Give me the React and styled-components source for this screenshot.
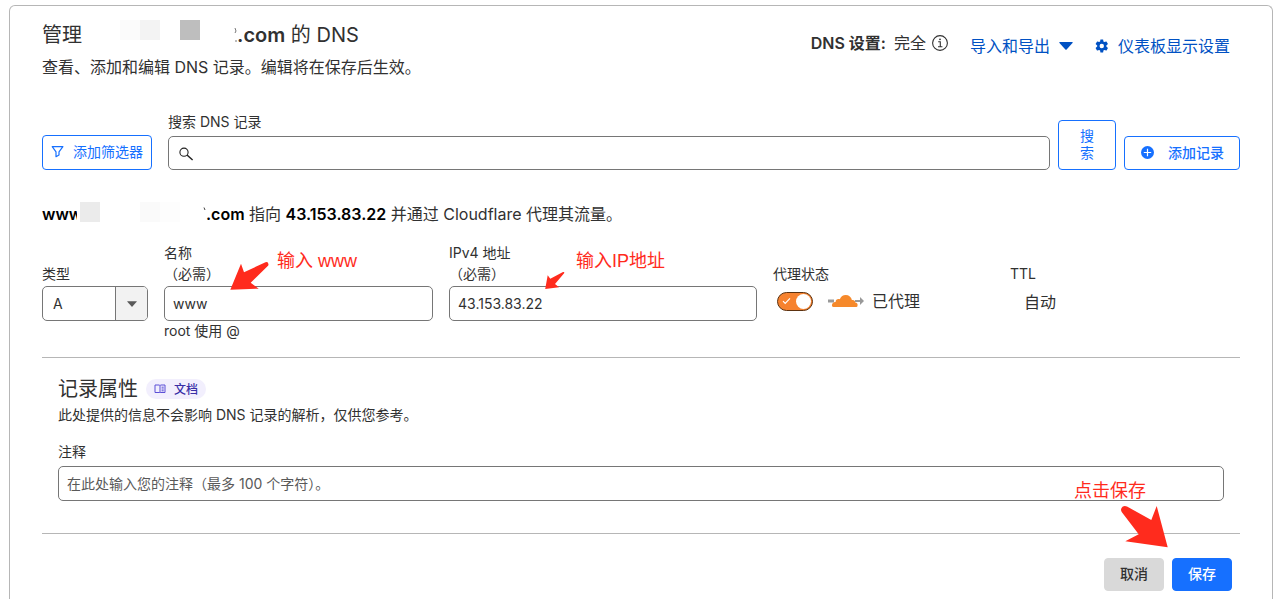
import React, { useState } from "react";
import styled, { createGlobalStyle, css } from "styled-components";

const GlobalStyle = createGlobalStyle`
  :root {
    --text: #313131;
    --muted: #595959;
    --line: #b6b6b6;
    --field: #767676;
    --blue: #1670ff;
    --link: #0051c3;
    --orange: #f6822f;
    --note: #ff2b1d;
  }

  * {
    box-sizing: border-box;
  }

  body {
    margin: 0;
    background: #fff;
    color: var(--text);
    font-family: Inter, "Noto Sans CJK SC", sans-serif;
    font-size: 14px;
    line-height: 21px;
  }

  button, input, select {
    font: inherit;
    color: inherit;
    margin: 0;
  }
`;

const Page = styled.main`
  padding: 5px 8px 0 9px;
`;

const Card = styled.section`
  padding: 14px 32px 8px;
  border: 1px solid var(--line);
  border-bottom: 0;
  border-radius: 6px 6px 0 0;
`;

const Header = styled.header`
  display: flex;
  justify-content: space-between;
  padding-right: 10px;
  margin-bottom: 32px;
`;

const Title = styled.h1`
  display: flex;
  align-items: center;
  margin: 0 0 5px;
  font-size: 20px;
  font-weight: 400;
  line-height: 30px;
  white-space: pre;

  strong {
    font-weight: 600;
  }
`;

const Subtitle = styled.p`
  margin: 0;
  font-size: 16px;
  line-height: 24px;
`;

const HeaderActions = styled.div`
  display: flex;
  align-items: center;
  gap: 22px;
  height: 52px;
  font-size: 16px;
  line-height: 24px;
`;

const DnsSetup = styled.div`
  display: flex;
  align-items: center;
  gap: 6px;
  padding-bottom: 6px;

  strong {
    font-weight: 600;
    margin-right: 2px;
  }
`;

const HeaderLink = styled.a`
  display: flex;
  align-items: center;
  gap: 9px;
  color: var(--link);
  text-decoration: none;
`;

// hidden part of the domain name, shown as a few grey tiles
const Mask = styled.span`
  display: flex;
  align-self: flex-start;
  width: ${({ $width }) => $width}px;
  padding-left: ${({ $start }) => $start}px;
  background: #fff;
`;

const Tile = styled.span`
  width: 20px;
  height: 20px;
  background: ${({ $tone }) => $tone};
`;

const Toolbar = styled.form`
  display: flex;
  align-items: flex-end;
  gap: 8px;
  margin-bottom: 32px;
`;

const Button = styled.button`
  display: flex;
  align-items: center;
  justify-content: center;
  gap: ${({ $gap }) => $gap || 8}px;
  height: 34px;
  padding: 0 ${({ $pad }) => $pad || 15}px 2px;
  border: 1px solid var(--blue);
  border-radius: 4px;
  background: #fff;
  color: var(--blue);
  white-space: nowrap;
  cursor: pointer;

  ${({ $kind }) =>
    $kind === "primary" &&
    css`
      background: var(--blue);
      color: #fff;
      font-weight: 500;
    `}

  ${({ $kind }) =>
    $kind === "cancel" &&
    css`
      background: #d9d9d9;
      border-color: #d9d9d9;
      color: var(--text);
      font-weight: 500;
    `}
`;

const FilterButton = styled(Button)`
  height: 35px;
  margin-right: 8px;
`;

const AddButton = styled(Button)`
  font-weight: 500;
`;

const SearchButton = styled(Button)`
  width: 58px;
  height: 50px;
  padding: 0 20px 2px;
  line-height: 17px;
  white-space: normal;
`;

const SearchField = styled.div`
  flex: 1;
  display: flex;
  flex-direction: column;
  gap: 4px;
`;

const inputBox = css`
  width: 100%;
  height: 35px;
  border: 1px solid var(--field);
  border-radius: 5px;
  background: #fff;
`;

const SearchBox = styled.div`
  ${inputBox}
  height: 34px;
  display: flex;
  align-items: center;
  gap: 8px;
  padding: 2px 8px 0 10px;

  input {
    flex: 1;
    border: 0;
    outline: 0;
    background: none;
  }
`;

const TextInput = styled.input`
  ${inputBox}
  padding: 0 8px;

  &::placeholder {
    color: var(--muted);
    opacity: 1;
  }
`;

const Summary = styled.p`
  display: flex;
  align-items: center;
  margin: 0 0 16px;
  font-size: 16px;
  line-height: 24px;
  white-space: pre;

  strong {
    color: #000;
    font-weight: 600;
  }
`;

// the mask that follows covers the end of this text
const Host = styled.strong`
  flex: none;
  width: 35px;
`;

const Fields = styled.div`
  display: grid;
  grid-template-columns: 106px 269fr 308fr 221fr 230fr;
  gap: 16px;
  padding-bottom: 16px;
  border-bottom: 1px solid var(--line);
`;

const Field = styled.div`
  position: relative;
  min-width: 0;
`;

const Label = styled.label`
  display: flex;
  flex-direction: column;
  justify-content: flex-end;
  height: 42px;
  margin-bottom: 2px;
`;

const Hint = styled.div`
  line-height: 20px;
`;

const SelectBox = styled.div`
  ${inputBox}
  display: grid;
  grid-template-columns: 1fr 32px;
  overflow: hidden;

  select {
    grid-area: 1 / 1 / 2 / 3;
    appearance: none;
    padding: 0 10px;
    border: 0;
    background: none;
  }
`;

const SelectArrow = styled.span`
  grid-area: 1 / 2;
  display: flex;
  align-items: center;
  justify-content: center;
  border-left: 1px solid var(--field);
  background: #f2f2f2;
  pointer-events: none;
`;

const ProxyRow = styled.div`
  display: flex;
  align-items: center;
  padding: 3px 4px 0;
  font-size: 16px;
  line-height: 24px;

  > svg {
    margin: 0 8px 0 15px;
  }
`;

const Toggle = styled.span`
  display: grid;
  align-items: center;

  > * {
    grid-area: 1 / 1;
  }

  > svg {
    margin-left: 5px;
    pointer-events: none;
  }
`;

const ToggleInput = styled.input`
  appearance: none;
  display: flex;
  justify-content: flex-start;
  width: 36px;
  height: 19px;
  padding: 1px;
  border: 1px solid #5c3210;
  border-radius: 10px;
  background: #999;
  cursor: pointer;

  &::after {
    content: "";
    width: 15px;
    height: 15px;
    border-radius: 50%;
    background: #fff;
  }

  &:checked {
    justify-content: flex-end;
    background: var(--orange);
  }
`;

const TtlValue = styled.div`
  padding: 4px 14px;
  font-size: 16px;
  line-height: 24px;
`;

const Attributes = styled.section`
  padding: 16px 16px 32px;
  border-bottom: 1px solid var(--line);
`;

const AttributesHead = styled.div`
  display: flex;
  align-items: center;
  gap: 8px;

  h2 {
    margin: 0;
    font-size: 20px;
    font-weight: 400;
    line-height: 30px;
  }
`;

const DocsBadge = styled.a`
  display: flex;
  align-items: center;
  gap: 8px;
  height: 20px;
  padding: 0 8px;
  border-radius: 10px;
  background: #f2effd;
  color: #3a2fa6;
  font-size: 12px;
  font-weight: 500;
  text-decoration: none;
`;

const AttributesText = styled.p`
  margin: 0 0 16px;
`;

const CommentLabel = styled.label`
  display: block;
  margin-bottom: 4px;
`;

const Footer = styled.footer`
  position: relative;
  display: flex;
  justify-content: flex-end;
  gap: 8px;
  padding: 24px 8px 0;

  button {
    height: 33px;
  }
`;

// red hand-drawn hints that lie over the form
const Note = styled.span`
  position: absolute;
  left: ${({ $left }) => $left};
  right: ${({ $right }) => $right};
  top: ${({ $top }) => $top};
  color: var(--note);
  font-family: "Liberation Sans", "Noto Sans CJK SC", sans-serif;
  font-size: 18px;
  line-height: 26px;
  white-space: nowrap;
  pointer-events: none;

  svg {
    display: block;
    fill: var(--note);
  }
`;

const InfoIcon = () => (
  <svg width="16" height="16" viewBox="0 0 16 16" fill="none" stroke="#313131">
    <circle cx="8" cy="8" r="7.4" strokeWidth="1.1" />
    <path d="M6.2 6.7H8.3V11.6M6 11.7H10.4" strokeWidth="1.1" />
    <circle cx="8" cy="4.3" r="0.9" fill="#313131" stroke="none" />
  </svg>
);

const CaretIcon = ({ width = 14, height = 8, color = "currentColor" }) => (
  <svg width={width} height={height} viewBox="0 0 14 8" fill={color}>
    <path d="M0.7 0H13.3Q14 0.3 13.5 1L7.6 7.6Q7 8.1 6.4 7.6L0.5 1Q0 0.3 0.7 0Z" />
  </svg>
);

const GearIcon = () => (
  <svg width="14" height="14" viewBox="0 0 24 24" fill="currentColor">
    <path d="M19.4 13a7.5 7.5 0 0 0 0-2l2.4-1.9c.3-.2.3-.5.2-.8l-2.2-3.8c-.2-.3-.5-.4-.8-.3l-2.8 1.1a8 8 0 0 0-1.8-1L14 1.4c0-.3-.3-.5-.6-.5H9.8c-.3 0-.5.2-.6.5l-.4 2.9a8 8 0 0 0-1.8 1L4.2 4.2c-.3-.1-.6 0-.8.3L1.2 8.3c-.1.3-.1.6.2.8L3.8 11a7.5 7.5 0 0 0 0 2l-2.4 1.9c-.3.2-.3.5-.2.8l2.2 3.8c.2.3.5.4.8.3L7 18.7a8 8 0 0 0 1.8 1l.4 2.9c.1.3.3.5.6.5h3.6c.3 0 .6-.2.6-.5l.4-2.9a8 8 0 0 0 1.8-1l2.8 1.1c.3.1.6 0 .8-.3l2.2-3.8c.1-.3.1-.6-.2-.8zM11.6 15.8a3.8 3.8 0 1 1 0-7.600 3.8 3.8 0 0 1 0 7.6z" />
  </svg>
);

const FilterIcon = () => (
  <svg width="13" height="13" viewBox="0 0 13 13" fill="none" stroke="currentColor" strokeWidth="1.2">
    <path d="M1.200 1.700H11.900L8 6.800V10L5 11.700V6.800Z" strokeLinejoin="round" />
  </svg>
);

const SearchIcon = () => (
  <svg width="15" height="14" viewBox="0 0 15 14" fill="none" stroke="#222">
    <circle cx="5" cy="5.200" r="4.100" strokeWidth="1.100" />
    <path d="M8 8L13.600 13" strokeWidth="1.500" />
  </svg>
);

const PlusIcon = () => (
  <svg width="14" height="14" viewBox="0 0 14 14">
    <circle cx="7.500" cy="7.500" r="6.500" fill="currentColor" />
    <path d="M7.500 3.800V11.200M3.800 7.500H11.200" stroke="#fff" strokeWidth="1.200" />
  </svg>
);

const CheckIcon = () => (
  <svg width="9" height="8" viewBox="0 0 9 8" fill="none" stroke="#fff" strokeWidth="1.2">
    <path d="M1 4.200L3.200 6.400L8 1.400" />
  </svg>
);

const CloudIcon = () => (
  <svg width="36" height="14" viewBox="0 0 36 14">
    <path d="M0 5.500H6V8.500H0ZM27 6H32V3L36 7L32 11V8H27Z" fill="#999" />
    <path
      d="M5.500 13C3.800 13 3.500 11 4.500 9.500C5 8.500 6.500 8 7.600 8C7.500 6 9.500 4.500 11.800 5.300C12.800 2.500 15 1 17.700 1C21 1 23.300 3 23.900 6C26 5.500 27.300 6.800 27.200 8.500C29 8.500 30 10 29.500 12Q29.300 13 28.300 13Z"
      fill="#f6892b"
    />
  </svg>
);

const BookIcon = () => (
  <svg width="12" height="10" viewBox="0 0 12 10" fill="none" stroke="#5b4fd6">
    <path d="M1 1H5.500L6 1.500L6.500 1H11V8.500H6.500L6 9L5.500 8.500H1ZM6 1.500V9M7.600 3.200H9.700M7.600 5H9.700M7.600 6.800H9.700" />
  </svg>
);

function App() {
  const [name, setName] = useState("www");
  const [address, setAddress] = useState("43.153.83.22");
  const [proxied, setProxied] = useState(true);
  const [comment, setComment] = useState("");

  return (
    <Page>
      <GlobalStyle />
      <Card>
        <Header>
          <div>
            <Title>
              管理
              <Mask $width={151} $start={38}>
                <Tile $tone="#fbfbfb" />
                <Tile $tone="#f3f3f3" />
                <Tile $tone="#fff" />
                <Tile $tone="#bebebe" />
              </Mask>
              <svg width="4" height="16" viewBox="0 0 4 16">
                <path d="M2 1L3 4L2 6M3 13V15" stroke="#777" fill="none" />
              </svg>
              <strong>.com</strong> 的 DNS
            </Title>
            <Subtitle>查看、添加和编辑 DNS 记录。编辑将在保存后生效。</Subtitle>
          </div>
          <HeaderActions>
            <DnsSetup>
              <strong>DNS 设置:</strong>
              <span>完全</span>
              <InfoIcon />
            </DnsSetup>
            <HeaderLink href="#import">
              导入和导出
              <CaretIcon />
            </HeaderLink>
            <HeaderLink href="#display">
              <GearIcon />
              仪表板显示设置
            </HeaderLink>
          </HeaderActions>
        </Header>

        <Toolbar onSubmit={(e) => e.preventDefault()}>
          <FilterButton type="button" $pad={8} $gap={9}>
            <FilterIcon />
            添加筛选器
          </FilterButton>
          <SearchField>
            <label htmlFor="search">搜索 DNS 记录</label>
            <SearchBox>
              <SearchIcon />
              <input id="search" type="text" />
            </SearchBox>
          </SearchField>
          <SearchButton type="submit">搜索</SearchButton>
          <AddButton type="button" $gap={14}>
            <PlusIcon />
            添加记录
          </AddButton>
        </Toolbar>

        <Summary>
          <Host>www</Host>
          <Mask $width={125} $start={3}>
            <Tile $tone="#ebebeb" />
            <Tile $tone="#fff" />
            <Tile $tone="#fff" />
            <Tile $tone="#fafafa" />
            <Tile $tone="#fdfdfd" />
          </Mask>
          <svg width="4" height="16" viewBox="0 0 4 16">
            <path d="M2 1.500L3 4" stroke="#444" />
          </svg>
          <strong>.com</strong> 指向 <strong>43.153.83.22</strong> 并通过 Cloudflare 代理其流量。
        </Summary>

        <Fields>
          <Field>
            <Label htmlFor="type">类型</Label>
            <SelectBox>
              <select id="type" defaultValue="A">
                <option>A</option>
                <option>AAAA</option>
                <option>CNAME</option>
              </select>
              <SelectArrow>
                <CaretIcon width={10} height={6} color="#595959" />
              </SelectArrow>
            </SelectBox>
          </Field>
          <Field>
            <Label htmlFor="name">
              <span>名称</span>
              <span>（必需）</span>
            </Label>
            <TextInput id="name" value={name} onChange={(e) => setName(e.target.value)} />
            <Hint>root 使用 @</Hint>
            <Note $left="113px" $top="6px">输入 www</Note>
            <Note $left="66px" $top="19px">
              <svg width="40" height="30" viewBox="0 0 40 30">
                <path d="M0.300 28.700L11 2.700L14 11.300L35.500 1.200Q38.300 0.500 38.500 3.500Q38.500 4.500 37.500 5.200L20.700 21.700L28.700 27.700Z" />
              </svg>
            </Note>
          </Field>
          <Field>
            <Label htmlFor="address">
              <span>IPv4 地址</span>
              <span>（必需）</span>
            </Label>
            <TextInput id="address" value={address} onChange={(e) => setAddress(e.target.value)} />
            <Note $left="127px" $top="6px">输入IP地址</Note>
            <Note $left="96px" $top="29px">
              <svg width="20" height="19" viewBox="0 0 20 19">
                <path d="M0.200 18L2.700 4.300L5.300 7.700L18 1Q19.500 0.600 19.300 2L10 13L14 16.300Z" />
              </svg>
            </Note>
          </Field>
          <Field>
            <Label htmlFor="proxied">代理状态</Label>
            <ProxyRow>
              <Toggle>
                <ToggleInput
                  id="proxied"
                  type="checkbox"
                  checked={proxied}
                  onChange={(e) => setProxied(e.target.checked)}
                />
                {proxied && <CheckIcon />}
              </Toggle>
              <CloudIcon />
              已代理
            </ProxyRow>
          </Field>
          <Field>
            <Label as="div">TTL</Label>
            <TtlValue>自动</TtlValue>
          </Field>
        </Fields>

        <Attributes>
          <AttributesHead>
            <h2>记录属性</h2>
            <DocsBadge href="#docs">
              <BookIcon />
              文档
            </DocsBadge>
          </AttributesHead>
          <AttributesText>此处提供的信息不会影响 DNS 记录的解析，仅供您参考。</AttributesText>
          <CommentLabel htmlFor="comment">注释</CommentLabel>
          <TextInput
            id="comment"
            placeholder="在此处输入您的注释（最多 100 个字符）。"
            value={comment}
            onChange={(e) => setComment(e.target.value)}
          />
        </Attributes>

        <Footer>
          <Note $right="94px" $top="-56px">点击保存</Note>
          <Note $right="72px" $top="-29px">
            <svg width="48" height="43" viewBox="0 0 48 43">
              <path d="M47.700 42.300L36.700 1L31.300 15L7 1.500Q4.500 0.500 2.500 1.800Q0 4 1.700 7L18.700 29.300L5.300 36.300Z" />
            </svg>
          </Note>
          <Button type="button" $kind="cancel">取消</Button>
          <Button type="button" $kind="primary">保存</Button>
        </Footer>
      </Card>
    </Page>
  );
}

export default App;
